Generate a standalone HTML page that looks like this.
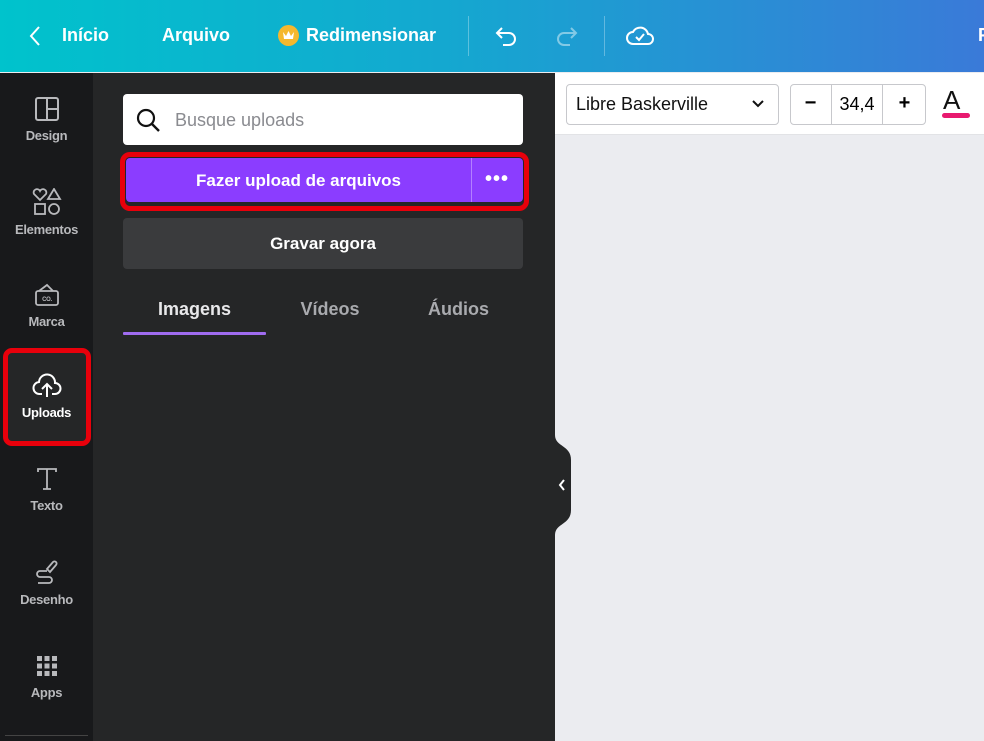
<!DOCTYPE html>
<html><head><meta charset="utf-8"><style>
*{margin:0;padding:0;box-sizing:border-box}
body{width:984px;height:741px;overflow:hidden;font-family:"Liberation Sans",sans-serif;background:#ebecf0;position:relative}
.top{position:absolute;left:0;top:0;width:984px;height:72px;background:linear-gradient(90deg,#00c3cc 0%,#14a8d0 45%,#3a7ad8 100%)}
.top span{position:absolute;top:25px;color:#fff;font-weight:bold;font-size:18px}
.sep{position:absolute;top:16px;width:1px;height:40px;background:rgba(255,255,255,.3)}
.side{position:absolute;left:0;top:73px;width:93px;height:668px;background:#18191b}
.nav{position:absolute;left:0;width:93px;text-align:center;color:#b8b9bc;font-size:13px;font-weight:bold;letter-spacing:-.3px}
.nav svg{display:block;margin:0 auto 6px}
.panel{position:absolute;left:93px;top:73px;width:462px;height:668px;background:#252627}
.tool{position:absolute;left:555px;top:73px;width:429px;height:62px;background:#fff;border-bottom:1px solid #e2e3e6}
.box{position:absolute;border:1px solid #c7c8cc;border-radius:4px;background:#fff}
</style></head><body>
<div class="top">
<svg style="position:absolute;left:28px;top:25px" width="14" height="22" viewBox="0 0 14 22"><path d="M11 2 L3 11 L11 20" stroke="#fff" stroke-width="2" fill="none"/></svg>
<span style="left:62px">Início</span>
<span style="left:162px">Arquivo</span>
<div style="position:absolute;left:278px;top:25px;width:21px;height:21px;border-radius:50%;background:#f5b82e"></div>
<svg style="position:absolute;left:282px;top:30px" width="13" height="10" viewBox="0 0 13 10"><path d="M1 2 L4 6 L6.5 1 L9 6 L12 2 L11 9 L2 9Z" fill="#fff"/></svg>
<span style="left:306px">Redimensionar</span>
<div class="sep" style="left:468px"></div>
<svg style="position:absolute;left:494px;top:24px" width="26" height="24" viewBox="0 0 26 24"><path d="M8 4 L3 9 L8 14 M3 9 H15 a6 6 0 0 1 0 12 H9" stroke="#fff" stroke-width="2" fill="none"/></svg>
<svg style="position:absolute;left:553px;top:24px" width="26" height="24" viewBox="0 0 26 24"><path d="M18 4 L23 9 L18 14 M23 9 H11 a6 6 0 0 0 0 12 H17" stroke="rgba(255,255,255,.45)" stroke-width="2" fill="none"/></svg>
<div class="sep" style="left:604px"></div>
<svg style="position:absolute;left:625px;top:22px" width="30" height="28" viewBox="0 0 30 28"><path d="M8 22 a6 6 0 0 1 0-12 a8 8 0 0 1 15 2 a5 5 0 0 1 0 10Z" stroke="#fff" stroke-width="2" fill="none"/><path d="M11 15 L14 18 L19 12" stroke="#fff" stroke-width="2" fill="none"/></svg>
<span style="left:978px">F</span>
</div>
<div class="side">
<div class="nav" style="top:23px"><svg width="26" height="26" viewBox="0 0 26 26"><rect x="2" y="2" width="22" height="22" rx="2" stroke="#b8b9bc" stroke-width="2" fill="none"/><path d="M13 2V24M13 13H24" stroke="#b8b9bc" stroke-width="2"/></svg>Design</div>
<div class="nav" style="top:115px"><svg width="30" height="28" viewBox="0 0 30 28"><path d="M8 12 L2 6 a3 3 0 0 1 6-3 a3 3 0 0 1 6 3Z" stroke="#b8b9bc" stroke-width="1.8" fill="none"/><path d="M22 1 L28 11 H16Z" stroke="#b8b9bc" stroke-width="1.8" fill="none"/><rect x="3" y="16" width="10" height="10" stroke="#b8b9bc" stroke-width="1.8" fill="none"/><circle cx="22" cy="21" r="5" stroke="#b8b9bc" stroke-width="1.8" fill="none"/></svg>Elementos</div>
<div class="nav" style="top:209px"><svg width="26" height="26" viewBox="0 0 26 26"><path d="M5 9 L13 3 L19 9" stroke="#b8b9bc" stroke-width="1.8" fill="none"/><rect x="2" y="9" width="22" height="14" rx="2" stroke="#b8b9bc" stroke-width="1.8" fill="none"/><text x="13" y="19" font-size="6" fill="#b8b9bc" text-anchor="middle" font-weight="bold">CO.</text></svg>Marca</div>
<div style="position:absolute;left:3px;top:275px;width:88px;height:98px;border:5px solid #e8000b;border-radius:9px;background:#252627"></div>
<div class="nav" style="top:300px;color:#fff"><svg width="30" height="26" viewBox="0 0 30 26"><path d="M10 21 H8 a6 6 0 0 1 -1-12 a8 8 0 0 1 16 1 a5 5 0 0 1 0 11 H20" stroke="#fff" stroke-width="2" fill="none"/><path d="M15 24 V12 M10 16 L15 11 L20 16" stroke="#fff" stroke-width="2" fill="none"/></svg>Uploads</div>
<div class="nav" style="top:393px"><svg width="26" height="26" viewBox="0 0 26 26"><path d="M4 6 V3 H22 V6 M13 3 V23 M9 23 H17" stroke="#b8b9bc" stroke-width="1.8" fill="none"/></svg>Texto</div>
<div class="nav" style="top:487px"><svg width="26" height="26" viewBox="0 0 26 26"><path d="M16 12 L22 5 a2 2 0 0 0 -3-3 L13 9Z M13 11 H6 a3 3 0 0 0 0 6 H15 a3 3 0 0 1 0 6 H4" stroke="#b8b9bc" stroke-width="1.8" fill="none"/></svg>Desenho</div>
<div class="nav" style="top:580px"><svg width="26" height="26" viewBox="0 0 26 26" fill="#b8b9bc"><rect x="3" y="3" width="5" height="5"/><rect x="10.5" y="3" width="5" height="5"/><rect x="18" y="3" width="5" height="5"/><rect x="3" y="10.5" width="5" height="5"/><rect x="10.5" y="10.5" width="5" height="5"/><rect x="18" y="10.5" width="5" height="5"/><rect x="3" y="18" width="5" height="5"/><rect x="10.5" y="18" width="5" height="5"/><rect x="18" y="18" width="5" height="5"/></svg>Apps</div>
<div style="position:absolute;left:5px;top:662px;width:83px;height:1px;background:#444"></div>
</div>
<div class="panel">
<div style="position:absolute;left:30px;top:21px;width:400px;height:51px;background:#fff;border-radius:4px"></div>
<svg style="position:absolute;left:43px;top:35px" width="26" height="26" viewBox="0 0 26 26"><circle cx="10" cy="10" r="8" stroke="#111" stroke-width="2.2" fill="none"/><path d="M16 16 L23 23" stroke="#111" stroke-width="2.4"/></svg>
<div style="position:absolute;left:82px;top:37px;font-size:18px;color:#8a8b90">Busque uploads</div>
<div style="position:absolute;left:27px;top:79px;width:409px;height:59px;border:5px solid #e8000b;border-radius:10px"></div>
<div style="position:absolute;left:33px;top:85px;width:397px;height:44px;background:#8b3dff;border-radius:4px"></div>
<div style="position:absolute;left:378px;top:85px;width:1px;height:44px;background:rgba(255,255,255,.35)"></div>
<div style="position:absolute;left:33px;top:98px;width:345px;text-align:center;color:#fff;font-weight:bold;font-size:17px">Fazer upload de arquivos</div>
<div style="position:absolute;left:392px;top:95px;color:#fff;font-weight:bold;font-size:20px;letter-spacing:1px">•••</div>
<div style="position:absolute;left:30px;top:145px;width:400px;height:51px;background:#3a3b3d;border-radius:4px;color:#fff;font-weight:bold;font-size:17px;text-align:center;line-height:51px">Gravar agora</div>
<div style="position:absolute;left:30px;top:226px;width:143px;text-align:center;color:#e8e8ea;font-weight:bold;font-size:18px">Imagens</div>
<div style="position:absolute;left:180px;top:226px;width:114px;text-align:center;color:#a9aaae;font-weight:bold;font-size:18px">Vídeos</div>
<div style="position:absolute;left:310px;top:226px;width:111px;text-align:center;color:#a9aaae;font-weight:bold;font-size:18px">Áudios</div>
<div style="position:absolute;left:30px;top:259px;width:143px;height:3px;background:#a06cf0;border-radius:1px"></div>
</div>
<svg style="position:absolute;left:555px;top:435px" width="18" height="100" viewBox="0 0 18 100"><path d="M0 0 C0 12 16 10 16 25 V75 C16 90 0 88 0 100Z" fill="#252627"/><path d="M9 45 L5 50 L9 55" stroke="#fff" stroke-width="2" fill="none"/></svg>
<div class="tool">
<div class="box" style="left:11px;top:11px;width:213px;height:41px"></div>
<div style="position:absolute;left:21px;top:21px;font-size:18px;color:#111">Libre Baskerville</div>
<svg style="position:absolute;left:196px;top:26px" width="14" height="10" viewBox="0 0 14 10"><path d="M2 2 L7 7 L12 2" stroke="#111" stroke-width="2" fill="none"/></svg>
<div class="box" style="left:235px;top:11px;width:136px;height:41px"></div>
<div style="position:absolute;left:276px;top:11px;width:1px;height:41px;background:#c7c8cc"></div>
<div style="position:absolute;left:327px;top:11px;width:1px;height:41px;background:#c7c8cc"></div>
<div style="position:absolute;left:235px;top:19px;width:41px;text-align:center;font-size:20px;font-weight:bold">−</div>
<div style="position:absolute;left:277px;top:21px;width:50px;text-align:center;font-size:18px">34,4</div>
<div style="position:absolute;left:328px;top:19px;width:43px;text-align:center;font-size:20px;font-weight:bold">+</div>
<div style="position:absolute;left:388px;top:12px;font-size:26px;color:#111">A</div>
<div style="position:absolute;left:387px;top:40px;width:28px;height:5px;background:#e8196f;border-radius:3px"></div>
</div>
</body></html>
